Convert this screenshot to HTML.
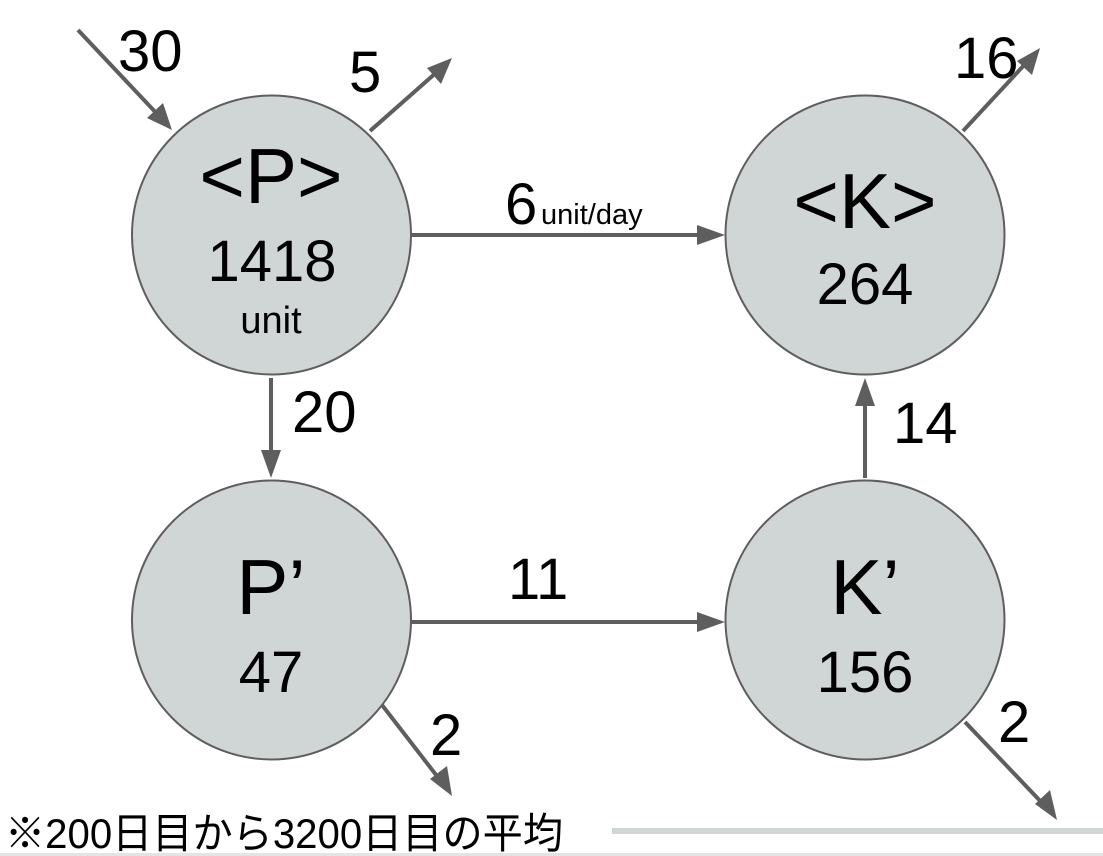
<!DOCTYPE html>
<html><head><meta charset="utf-8"><style>
html,body{margin:0;padding:0;background:#fff;}
svg{display:block;}
text{font-family:"Liberation Sans","Noto Sans CJK JP",sans-serif;fill:#000;}
</style></head><body>
<svg width="1103" height="856" viewBox="0 0 1103 856" xmlns="http://www.w3.org/2000/svg">
<g stroke="#5f5e5f" stroke-width="4" fill="none">
<line x1="78" y1="30" x2="160" y2="117"/>
<line x1="370" y1="131" x2="438" y2="71"/>
<line x1="411" y1="235" x2="700" y2="235"/>
<line x1="271" y1="378" x2="271" y2="455"/>
<line x1="411" y1="622" x2="700" y2="622"/>
<line x1="865" y1="478" x2="865" y2="402"/>
<line x1="963" y1="131" x2="1027" y2="62"/>
<line x1="382" y1="705" x2="440" y2="780"/>
<line x1="965" y1="722" x2="1045" y2="806"/>
</g>
<g fill="#5f5e5f">
<polygon points="172,130 147,118 163,103"/>
<polygon points="452,58 441,84 427,68"/>
<polygon points="725,235 697,225 697,245"/>
<polygon points="271,478 261,450 281,450"/>
<polygon points="725,622 697,612 697,632"/>
<polygon points="865,378 855,406 875,406"/>
<polygon points="1040,48 1032,75 1017,61"/>
<polygon points="452,796 430,779 447,766"/>
<polygon points="1057,820 1035,804 1050,790"/>
</g>
<g fill="#d0d5d5" stroke="#5f5e5f" stroke-width="2">
<circle cx="271.5" cy="235" r="139.5"/>
<circle cx="865" cy="235" r="139.5"/>
<circle cx="271.5" cy="620" r="139.5"/>
<circle cx="865" cy="620" r="139.5"/>
</g>
<g text-anchor="middle">
<text x="271" y="203" font-size="78">&lt;P&gt;</text>
<text x="272" y="281" font-size="58">1418</text>
<text x="271" y="333" font-size="38">unit</text>
<text x="865" y="228" font-size="78">&lt;K&gt;</text>
<text x="865" y="304" font-size="58">264</text>
<text x="271" y="614" font-size="78">P’</text>
<text x="271" y="692" font-size="58">47</text>
<text x="865" y="614" font-size="78">K’</text>
<text x="865" y="692" font-size="58">156</text>
</g>
<g font-size="58">
<text x="118" y="71">30</text>
<text x="349" y="92">5</text>
<text x="505" y="224">6</text>
<text x="541" y="224" font-size="29">unit/day</text>
<text x="292" y="432">20</text>
<text x="508" y="599">11</text>
<text x="893" y="443">14</text>
<text x="954" y="78">16</text>
<text x="430" y="755">2</text>
<text x="998" y="742">2</text>
</g>
<text x="5" y="848" font-size="42" textLength="558" lengthAdjust="spacingAndGlyphs">※200日目から3200日目の平均</text>
<rect x="612" y="828" width="491" height="6" fill="#d0d5d5"/>
<rect x="0" y="853" width="1103" height="3" fill="#e4e4e4"/>
</svg>
</body></html>
